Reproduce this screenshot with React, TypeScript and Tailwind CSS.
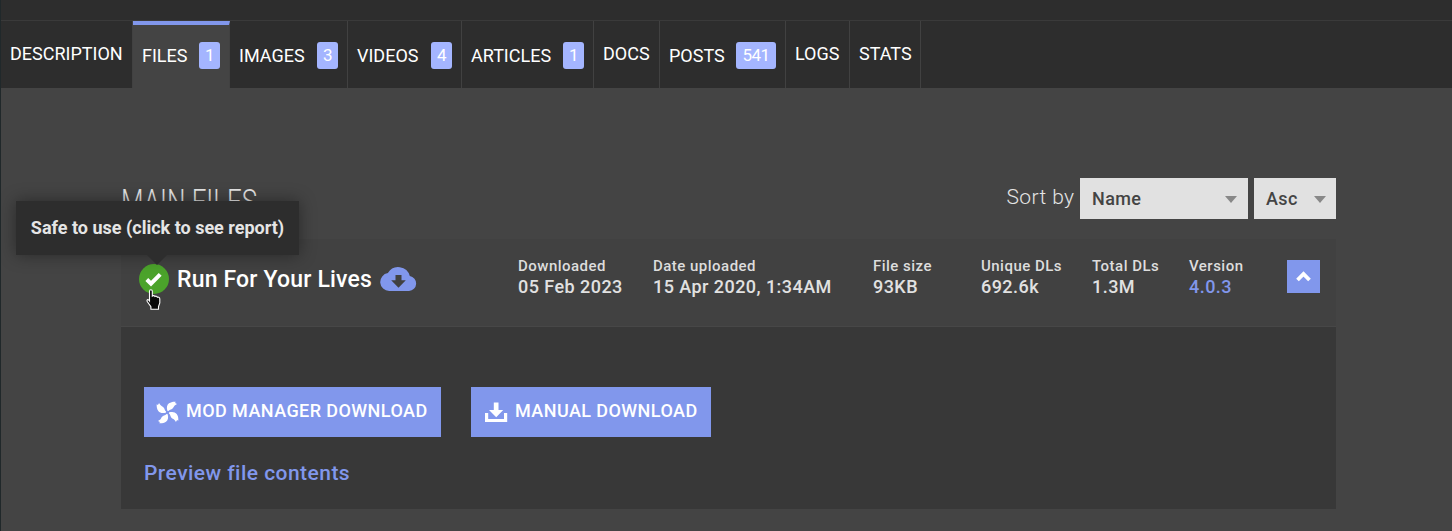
import type { ReactNode } from "react";

type Tab = { label: string; count?: string; width: string; active?: boolean };

const tabs: Tab[] = [
  { label: "Description", width: "w-[132px]" },
  { label: "Files", count: "1", width: "w-[97px]", active: true },
  { label: "Images", count: "3", width: "w-[118px]" },
  { label: "Videos", count: "4", width: "w-[114px]" },
  { label: "Articles", count: "1", width: "w-[132px]" },
  { label: "Docs", width: "w-[66px]" },
  { label: "Posts", count: "541", width: "w-[126px]" },
  { label: "Logs", width: "w-[64px]" },
  { label: "Stats", width: "w-[71px]" },
];

const stats = [
  { label: "Downloaded", value: "05 Feb 2023", width: "w-[135px]" },
  { label: "Date uploaded", value: "15 Apr 2020, 1:34AM", width: "w-[220px]" },
  { label: "File size", value: "93KB", width: "w-[108px]" },
  { label: "Unique DLs", value: "692.6k", width: "w-[111px]" },
  { label: "Total DLs", value: "1.3M", width: "w-[96px]" },
  { label: "Version", value: "4.0.3", width: "w-[98px]", link: true },
];

function TabItem({ tab }: { tab: Tab }) {
  return (
    <li
      className={`${tab.width} flex h-full shrink-0 justify-between border-r border-[#414141] pl-[9px] pr-[9px] text-[18px] uppercase leading-[26px] text-white ${
        tab.active ? "border-t-4 border-t-[#8197ec] bg-[#444444] pt-[18px]" : tab.count ? "pt-[22px]" : "pt-5"
      }`}
    >
      <span className="whitespace-nowrap">{tab.label}</span>
      {tab.count && (
        <span
          className={`${tab.count.length > 1 ? "w-10" : "w-[21px]"} -mt-px h-[27px] rounded-[3px] bg-[#a4b5ff] text-center text-[17px] leading-[27px] tracking-[-0.5px]`}
        >
          {tab.count}
        </span>
      )}
    </li>
  );
}

function Select({ value, width }: { value: string; width: string }) {
  return (
    <div className={`${width} flex h-[41px] items-center justify-between bg-[#e1e1e1] pl-3`}>
      <span className="text-[18px] font-medium tracking-[0.4px] text-[#444444]">{value}</span>
      <svg className="mt-px" width="12" height="7" viewBox="0 0 12 7" fill="#888888">
        <path d="M0 0h12L6 7z" />
      </svg>
    </div>
  );
}

function DownloadButton({ icon, label, width }: { icon: ReactNode; label: string; width: string }) {
  return (
    <button className={`${width} flex h-[50px] items-center bg-[#8197ec] text-[18px] font-medium uppercase tracking-[0.43px] text-white`}>
      {icon}
      <span className="-mt-[3px] whitespace-nowrap">{label}</span>
    </button>
  );
}

function PinwheelIcon() {
  const blade =
    "M11.300 9.800C10.400 6.300 11 3.900 13 2.300C14.900.900 17.200.500 19.700.700L19.100 1.900 21 3.100C20 3.500 18.900 4.300 18 5.600C17.200 7.200 16.300 8.300 14.200 8.800C13.500 9 12.900 9.400 12.500 10.100z";
  return (
    <svg className="ml-3 mr-[7px]" width="23" height="23" viewBox="0 0 23 23" fill="#fff">
      <path d={blade} />
      <path d={blade} transform="rotate(90 11.5 11.5)" />
      <path d={blade} transform="rotate(180 11.5 11.5)" />
      <path d={blade} transform="rotate(270 11.5 11.5)" />
    </svg>
  );
}

function TrayIcon() {
  return (
    <svg className="ml-[14px] mr-[7px]" width="23" height="21" viewBox="0 0 23 21" fill="#fff">
      <path d="M8.800.5h4.700V8h4.700L11.200 15.200 4 8h4.800z" />
      <path d="M0 11h3.200V17h15.800V11h3.200V20H0z" />
    </svg>
  );
}

function CloudIcon() {
  return (
    <svg width="37" height="24" viewBox="0 0 37 24">
      <path
        fill="#8197ec"
        d="M29.800 9.100A11.900 11.900 0 0 0 7.900 6.100 9 9 0 0 0 9.200 24H29A7.500 7.500 0 0 0 29.800 9.100z"
      />
      <path fill="#414141" d="M15.500 8h6v5.200h4.300L18.500 20.800l-7.300-7.600h4.300z" />
    </svg>
  );
}

export default function App() {
  return (
    <div className="flex h-[531px] w-full flex-col overflow-hidden border-l border-[#20282a] bg-[#444444] font-['Roboto',sans-serif]">
      <nav className="h-[88px] shrink-0 bg-[#2d2d2d] pt-5">
        <ul className="flex h-[68px] border-t border-[#3a3a3a]">
          {tabs.map((tab) => (
            <TabItem key={tab.label} tab={tab} />
          ))}
        </ul>
      </nav>

      <main className="ml-[120px] w-[1215px] pt-[90px]">
        <div className="flex h-[61px] items-start justify-between">
          <h2 className="mt-[7px] origin-left scale-x-[0.765] whitespace-nowrap text-[34px] font-light uppercase leading-[32px] text-[#e5e5e5]">
            Main files
          </h2>
          <div className="flex items-start">
            <span className="mr-[5.500px] mt-[3px] text-[21px] font-light leading-[32px] tracking-[0.4px] text-[#e5e5e5]">Sort by</span>
            <Select value="Name" width="w-[168px] mr-1.5 pr-[11px]" />
            <Select value="Asc" width="w-[82px] pr-[10px]" />
          </div>
        </div>

        <section>
          <header className="flex h-[88px] items-start border-b border-[#474747] bg-[#414141] pl-[18px]">
            <div className="flex w-[379px] shrink-0 items-center pt-[25px]">
              <div className="relative size-[30px] shrink-0">
                <svg width="30" height="30" viewBox="0 0 30 30">
                  <circle cx="15" cy="15" r="15" fill="#4ba32b" />
                  <path d="M7.800 15.500l4.200 4.200 9.200-9.400" fill="none" stroke="#fff" strokeWidth="4" />
                </svg>
                <div className="absolute bottom-[39px] left-[-123px] z-10 flex h-[54px] w-[283px] items-center justify-center whitespace-nowrap bg-[#2d2d2d] pb-0.5 text-[18px] font-bold text-[#e5e5e5] shadow-[0_0_16px_rgba(0,0,0,0.4)]">
                  <span>Safe to use (click to see report)</span>
                  <svg className="absolute left-[131px] top-[54px]" width="20" height="10" viewBox="0 0 20 10">
                    <path d="M0 0h20L10 10z" fill="#2d2d2d" />
                  </svg>
                </div>
                <svg className="absolute left-[7px] top-[25px] z-20" width="15" height="21" viewBox="0 0 15 21">
                  <path
                    d="M3.500 12V2.200C3.500.2 6.300.2 6.300 2.200V7C7 6.300 8.600 6.600 8.900 7.400 9.800 6.900 11 7.300 11.300 8.200 12.600 7.800 13.800 8.500 13.800 9.900V14L12.500 17.500V20.200H4.900V17.700L1.400 12.800C.2 10.700 2 9.700 3.500 12z"
                    fill="#080808"
                    stroke="#fff"
                    strokeWidth="1.100"
                  />
                </svg>
              </div>
              <h3 className="ml-2 h-[30px] whitespace-nowrap text-[23px] font-medium leading-[32px] tracking-[0.18px] text-white">
                Run For Your Lives
              </h3>
              <span className="ml-[7.500px] h-6">
                <CloudIcon />
              </span>
            </div>
            <dl className="flex pt-[17px]">
              {stats.map((s) => (
                <div key={s.label} className={`${s.width} shrink-0 whitespace-nowrap font-medium ${s.link ? "ml-px" : ""}`}>
                  <dt className="text-[15px] leading-[21px] tracking-[0.48px] text-[#dddddd]">{s.label}</dt>
                  <dd className={`-mt-px text-[18px] leading-[21px] tracking-[0.45px] ${s.link ? "text-[#8197ec]" : "text-[#e1e1e1]"}`}>{s.value}</dd>
                </div>
              ))}
            </dl>
            <button className="mt-[21px] flex size-[33px] items-center justify-center bg-[#8197ec]">
              <svg width="15" height="11" viewBox="0 0 15 11">
                <path d="M1.500 9l6-6 6 6" fill="none" stroke="#fff" strokeWidth="3.800" />
              </svg>
            </button>
          </header>

          <div className="h-[182px] bg-[#383838] pl-[23px] pt-[60px]">
            <div className="flex gap-[30px]">
              <DownloadButton icon={<PinwheelIcon />} label="Mod manager download" width="w-[297px]" />
              <DownloadButton icon={<TrayIcon />} label="Manual download" width="w-[240px]" />
            </div>
            <a className="mt-[22px] block text-[21px] font-medium leading-[28px] tracking-[0.46px] text-[#8197ec]">
              Preview file contents
            </a>
          </div>
        </section>
      </main>
    </div>
  );
}
